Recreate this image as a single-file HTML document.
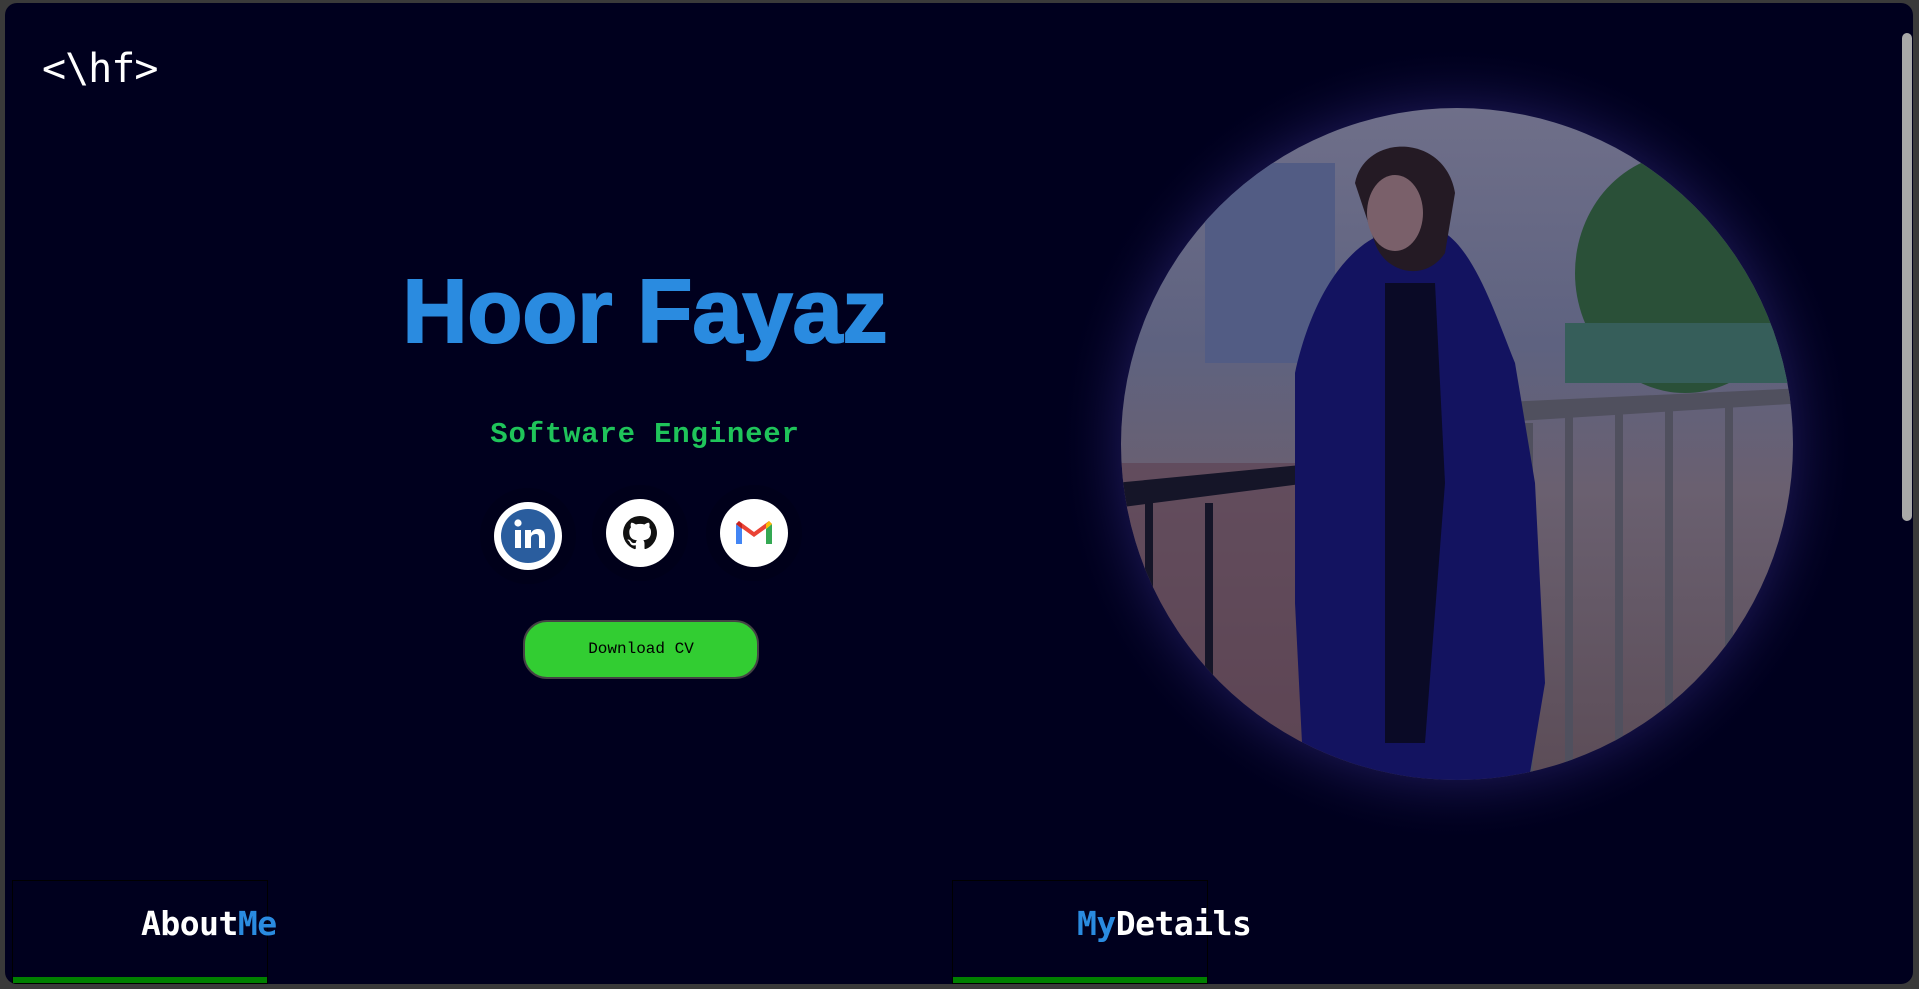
<!DOCTYPE html>
<html><head><meta charset="utf-8"><style>
html,body{margin:0;padding:0;width:1919px;height:989px;overflow:hidden;background:#3a3a3a;}
.frame{position:absolute;left:5px;top:3px;width:1908px;height:981px;background:#00001e;border-radius:12px;overflow:hidden;}
.logo{position:absolute;left:37px;top:43px;font:500 40px "DejaVu Sans Mono","Liberation Mono",monospace;color:#fff;letter-spacing:-1px;}
h1{position:absolute;left:340px;top:258px;width:600px;text-align:center;margin:0;font:900 90px "Liberation Sans",sans-serif;color:#2a8be0;letter-spacing:0px;-webkit-text-stroke:2px #2a8be0;}
.sub{position:absolute;left:380px;top:415px;width:520px;text-align:center;font:bold 29px "Liberation Mono",monospace;color:#1fc45a;letter-spacing:0.8px;}
.ic{position:absolute;width:68px;height:68px;border-radius:50%;background:#fff;box-shadow:0 0 0 14px #00001a;}
.btn{position:absolute;left:518px;top:617px;width:236px;height:59px;border-radius:24px;background:#32cd32;border:2px solid #444;box-sizing:border-box;text-align:center;font:16px/55px "Liberation Mono",monospace;color:#000;}
.tab{position:absolute;top:877px;height:104px;border:1px solid #000;box-sizing:border-box;}
.tab .bar{position:absolute;left:0;right:0;bottom:0;height:6px;background:#008000;}
.tt{position:absolute;top:901px;font:bold 33px "DejaVu Sans Mono","Liberation Mono",monospace;color:#fff;letter-spacing:-0.5px;}
.sb{position:absolute;left:1897px;top:30px;width:10px;height:488px;background:#a8a8a8;border-radius:5px;}
</style></head><body>
<div class="frame">
<div class="logo">&lt;\hf&gt;</div>
<h1>Hoor Fayaz</h1>
<div class="sub">Software Engineer</div>
<div class="ic" style="left:489px;top:499px;"><svg width="68" height="68" viewBox="0 0 68 68"><circle cx="34" cy="34" r="27" fill="#2a5d9e"/><rect x="21" y="28" width="6" height="18" fill="#fff"/><circle cx="24" cy="21" r="3.6" fill="#fff"/><path d="M31 28h6v3c2-3 4-4 7-4 5 0 7 3 7 8v11h-6V36c0-3-1-4-3-4s-5 1-5 4v10h-6z" fill="#fff"/></svg></div>
<div class="ic" style="left:601px;top:496px;"><svg width="68" height="68" viewBox="0 0 68 68"><path d="M34 17a17 17 0 0 0-5.4 33.1c.9.2 1.2-.4 1.2-.8v-3c-4.7 1-5.7-2.3-5.7-2.3-.8-2-1.9-2.5-1.9-2.5-1.5-1 .1-1 .1-1 1.7.1 2.6 1.7 2.6 1.7 1.5 2.6 4 1.9 5 1.4.2-1.1.6-1.9 1.1-2.3-3.8-.4-7.7-1.9-7.7-8.4 0-1.9.7-3.4 1.7-4.6-.2-.4-.8-2.2.2-4.5 0 0 1.4-.5 4.7 1.7a16 16 0 0 1 8.5 0c3.2-2.2 4.7-1.7 4.7-1.7.9 2.3.3 4.1.2 4.5 1.1 1.2 1.7 2.7 1.7 4.6 0 6.5-4 7.9-7.7 8.4.6.5 1.2 1.6 1.2 3.2v4.7c0 .5.3 1 1.2.8A17 17 0 0 0 34 17z" fill="#111"/></svg></div>
<div class="ic" style="left:715px;top:496px;"><svg width="68" height="68" viewBox="0 0 68 68"><path d="M16 25v20h6V30z" fill="#4285f4"/><path d="M46 30v15h6V25z" fill="#34a853"/><path d="M16 25l18 13 18-13-3-3-15 11-15-11z" fill="#ea4335"/><path d="M16 25l3-3 3 3v5z" fill="#c5221f"/><path d="M52 25l-3-3-3 3v5z" fill="#fbbc04"/></svg></div>
<div class="btn">Download CV</div>
<svg style="position:absolute;left:1000px;top:0" width="900" height="900">
<defs>
<radialGradient id="gl"><stop offset="0.8" stop-color="#1a1650"/><stop offset="1" stop-color="#00001e" stop-opacity="0"/></radialGradient>
<clipPath id="c"><circle cx="452" cy="441" r="336"/></clipPath>
<linearGradient id="bg" x1="0" y1="0" x2="0" y2="1"><stop offset="0" stop-color="#70708a"/><stop offset="0.35" stop-color="#5e6280"/><stop offset="0.55" stop-color="#6a6070"/><stop offset="1" stop-color="#5a4a54"/></linearGradient>
</defs>
<circle cx="452" cy="441" r="400" fill="url(#gl)"/>
<g clip-path="url(#c)">
<rect x="100" y="90" width="720" height="720" fill="url(#bg)"/>
<rect x="200" y="160" width="130" height="200" fill="#525c84"/>
<ellipse cx="680" cy="270" rx="110" ry="120" fill="#2a5038"/>
<rect x="560" y="320" width="250" height="60" fill="#365e5a"/>
<rect x="110" y="460" width="300" height="300" fill="#5e4050" opacity=".6"/>
<path d="M110 480L420 450 420 465 110 505z" fill="#151528"/>
<path d="M480 400L800 385 800 400 480 420z" fill="#50505e"/>
<g fill="#50505e"><rect x="520" y="420" width="8" height="400"/><rect x="560" y="410" width="8" height="400"/><rect x="610" y="410" width="8" height="400"/><rect x="660" y="405" width="8" height="400"/><rect x="720" y="400" width="8" height="400"/></g>
<rect x="140" y="500" width="8" height="300" fill="#151528"/><rect x="200" y="500" width="8" height="300" fill="#151528"/>
<path d="M290 370 C310 280 350 240 380 230 L440 230 C470 250 490 310 510 360 L530 480 540 680 520 800 300 800 290 600z" fill="#131360"/>
<path d="M350 180 C360 130 440 130 450 190 L440 250 C420 280 380 270 370 240z" fill="#241a24"/>
<ellipse cx="390" cy="210" rx="28" ry="38" fill="#7a606a"/>
<path d="M380 280 L430 280 440 480 420 740 380 740z" fill="#0a0a26"/>
</g>
</svg>
<div class="tab" style="left:7px;width:256px;"><div class="bar"></div></div>
<div class="tab" style="left:947px;width:256px;"><div class="bar"></div></div>
<div class="tt" style="left:136px;">About<span style="color:#2a8be0">Me</span></div>
<div class="tt" style="left:1072px;"><span style="color:#2a8be0">My</span>Details</div>
<div class="sb"></div>
</div>
</body></html>
